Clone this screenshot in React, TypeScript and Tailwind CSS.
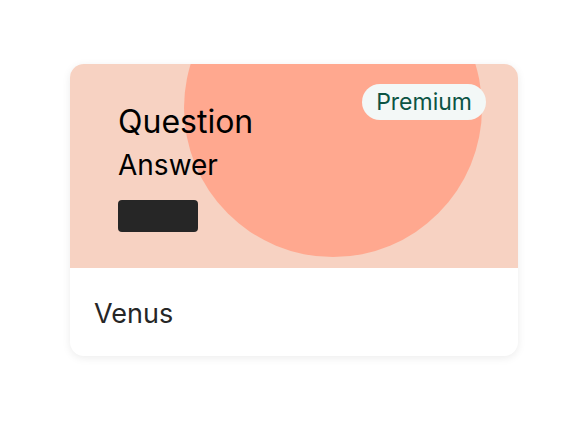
export default function App() {
  return (
    <div className="min-h-[430px] w-[588px] bg-white pt-16 pl-[70px]" style={{ fontFamily: "Inter, 'Noto Sans', sans-serif" }}>
      <div className="w-[448px] overflow-hidden rounded-[14px] bg-white shadow-[0_2px_8px_rgba(0,0,0,0.08)]">
        <div className="relative h-[204px] overflow-hidden bg-[#f7d2c2]">
          <div className="absolute left-[114px] top-[-105px] h-[298px] w-[298px] rounded-full bg-[#ffa88f]" />
          <span className="absolute right-8 top-5 rounded-full bg-[#f3f8f7] px-[14px] py-1 text-[23px] leading-7 text-[#0b5444]">
            Premium
          </span>
          <div className="relative flex flex-col items-start pl-12 pt-[38px]">
            <div className="text-[32px] leading-[40px] text-black">Question</div>
            <div className="mt-[5px] text-[28px] leading-[36px] text-black">Answer</div>
            <div className="mt-[17px] h-8 w-20 rounded bg-[#262626]" />
          </div>
        </div>
        <div className="flex h-[88px] items-center px-6 pt-[3px] text-[27px] leading-9 text-[#262626]">Venus</div>
      </div>
    </div>
  );
}
